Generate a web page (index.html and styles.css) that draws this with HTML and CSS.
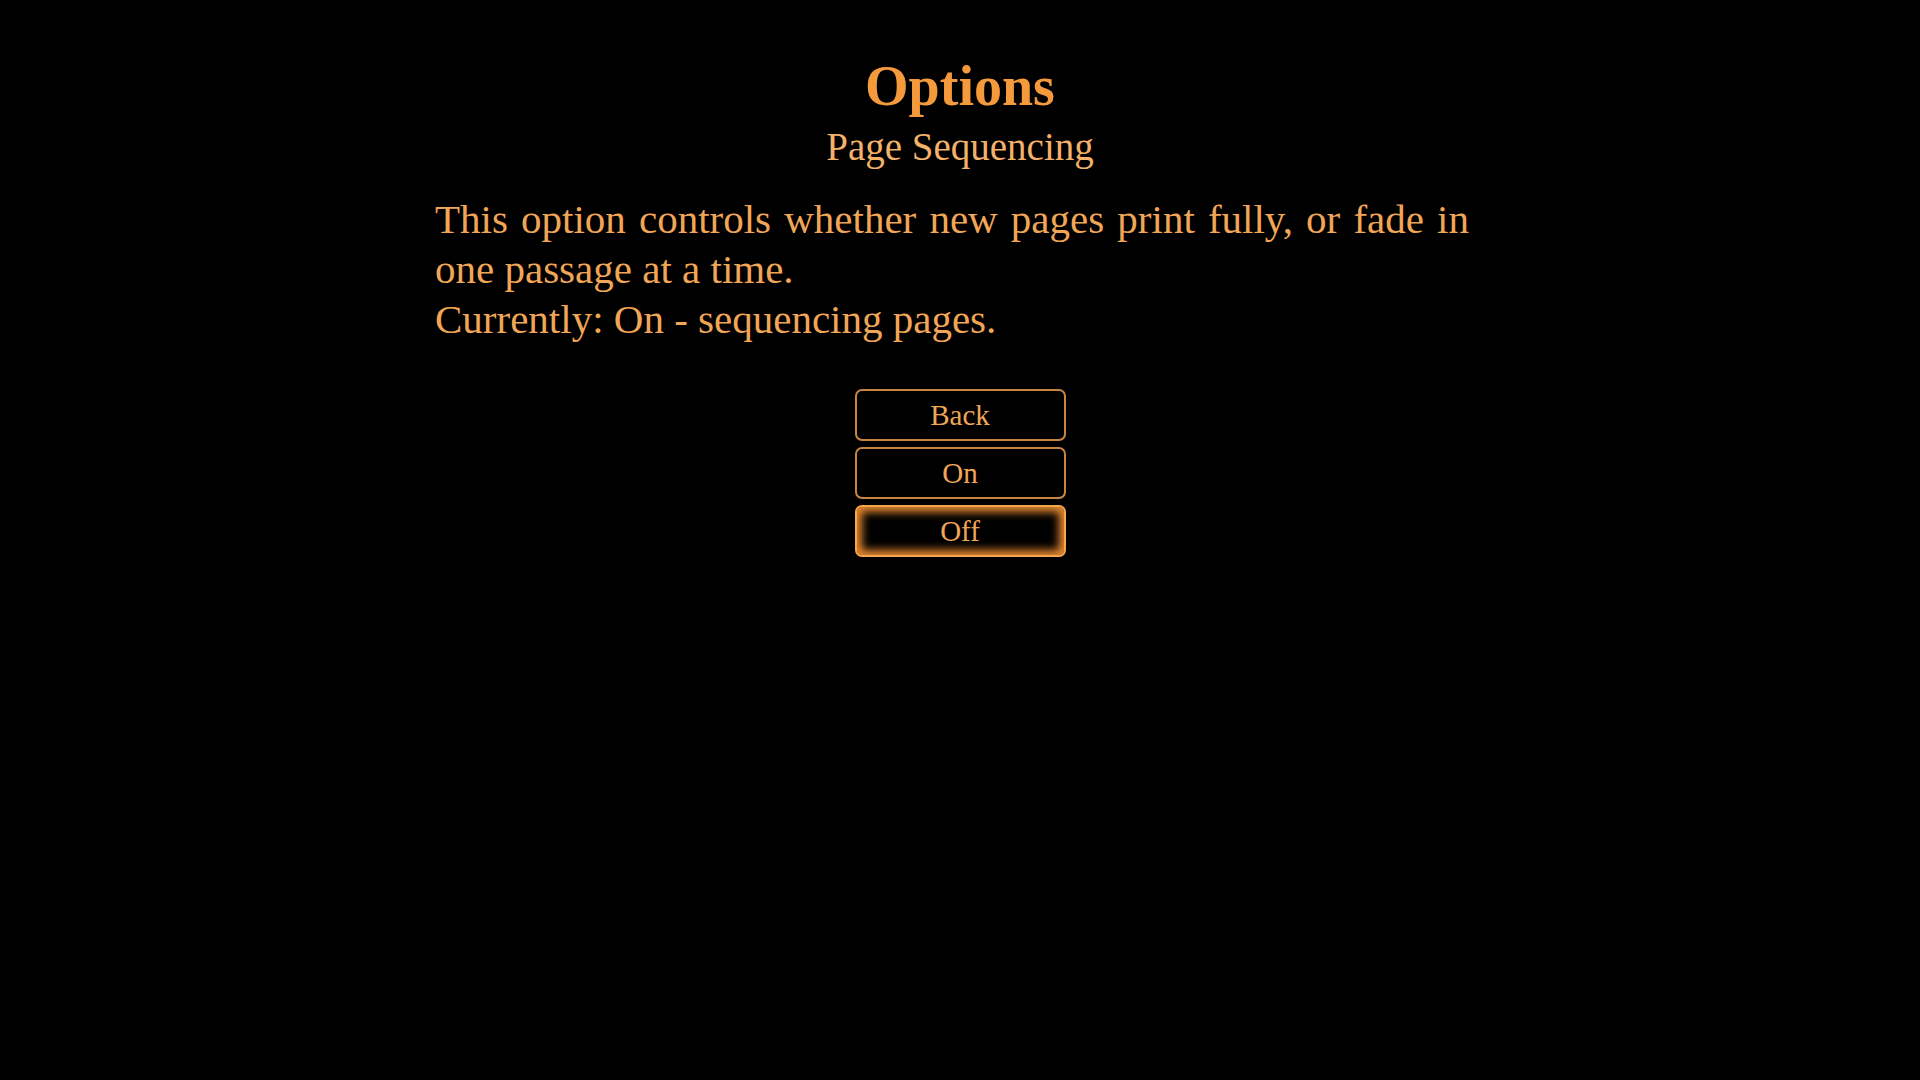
FILE: index.html
```html
<!DOCTYPE html>
<html lang="en">
<head>
<meta charset="utf-8">
<title>Options</title>
<link rel="stylesheet" href="styles.css">
</head>
<body>
<main class="screen">
  <h1 class="title">Options</h1>
  <h2 class="subtitle">Page Sequencing</h2>
  <div class="desc">
    <p class="desc-line">This option controls whether new pages print fully, or fade in one passage at a time.</p>
    <p class="desc-line">Currently: On - sequencing pages.</p>
  </div>
  <nav class="menu">
    <button class="btn">Back</button>
    <button class="btn">On</button>
    <button class="btn btn-active">Off</button>
  </nav>
</main>
</body>
</html>
```
FILE: styles.css
```css
html, body {
  margin: 0;
  padding: 0;
  background: #000;
  height: 100%;
}
body {
  font-family: "Liberation Serif", "Times New Roman", serif;
  color: #f1a657;
}
.screen {
  display: flex;
  flex-direction: column;
  align-items: center;
  padding-top: 53px;
}
.title {
  margin: 0;
  font-size: 56px;
  line-height: 67px;
  font-weight: bold;
  color: #f59a3c;
}
.subtitle {
  margin: 3px 0 0 0;
  font-size: 39px;
  line-height: 48px;
  font-weight: normal;
  color: #f3b169;
}
.desc {
  width: 1034px;
  padding-right: 16px;
  margin-top: 23px;
}
.desc-line {
  margin: 0;
  font-size: 41px;
  line-height: 50px;
  text-align: justify;
}
.menu {
  display: flex;
  flex-direction: column;
  gap: 6px;
  margin-top: 45px;
}
.btn {
  width: 211px;
  height: 52px;
  box-sizing: border-box;
  background: #000;
  border: 2px solid #c8853f;
  border-radius: 7px;
  color: #f1a657;
  font-family: "Liberation Serif", "Times New Roman", serif;
  font-size: 29px;
  line-height: 48px;
  padding: 0;
  text-align: center;
}
.btn-active {
  border-color: #f7a64e;
  box-shadow: inset 0 0 8px 5px #e8892f;
}
```
